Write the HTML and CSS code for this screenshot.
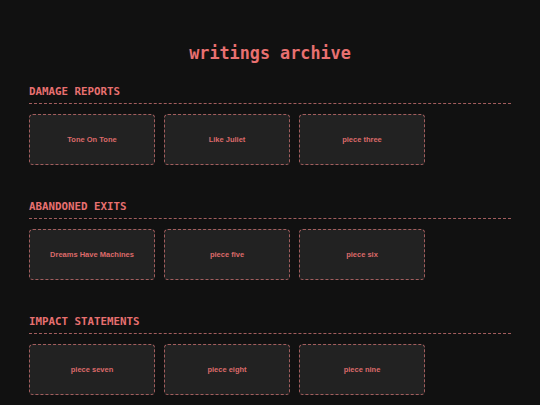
FILE: index.html
```html
<!DOCTYPE html>
<html lang="en">
  <head>
    <meta charset="UTF-8" />
    <meta name="viewport" content="width=device-width, initial-scale=1.0" />
    <title>writings archive</title>
    <link rel="stylesheet" href="styles.css">
  </head>
  <body>
    <div id="root">
      <h1 class="title">writings archive</h1>

      <section class="group">
        <h2 class="group-title">DAMAGE REPORTS</h2>
        <ul class="pieces">
          <li class="piece">Tone On Tone</li>
          <li class="piece">Like Juliet</li>
          <li class="piece">piece three</li>
        </ul>
      </section>

      <section class="group">
        <h2 class="group-title">ABANDONED EXITS</h2>
        <ul class="pieces">
          <li class="piece">Dreams Have Machines</li>
          <li class="piece">piece five</li>
          <li class="piece">piece six</li>
        </ul>
      </section>

      <section class="group">
        <h2 class="group-title">IMPACT STATEMENTS</h2>
        <ul class="pieces">
          <li class="piece">piece seven</li>
          <li class="piece">piece eight</li>
          <li class="piece">piece nine</li>
        </ul>
      </section>
    </div>
  </body>
</html>
```

FILE: styles.css
```css
* {
  margin: 0;
  padding: 0;
  box-sizing: border-box;
}
ul {
  list-style-type: none;
}
body {
  background-color: #111;
  color: #e87070;
  font-family: "DejaVu Sans Mono", monospace;
}
#root {
  padding: 43px 29px 0;
}
.title {
  font-size: 16.8px;
  line-height: 20px;
  font-weight: bold;
  text-align: center;
}
.group {
  margin-top: 22px;
}
.group + .group {
  margin-top: 35px;
}
.group-title {
  font-size: 10.8px;
  line-height: 13px;
  font-weight: bold;
  padding-bottom: 5px;
  border-bottom: 1px dashed #a35e5e;
}
.pieces {
  display: grid;
  grid-template-columns: repeat(3, 126px);
  gap: 9px;
  margin-top: 10px;
}
.piece {
  height: 51px;
  display: flex;
  justify-content: center;
  align-items: center;
  background-color: #222;
  border: 1px dashed #a35e5e;
  border-radius: 4px;
  font-family: "Liberation Sans", Arial, sans-serif;
  font-size: 7.5px;
  font-weight: bold;
  color: #dd6a6a;
  cursor: pointer;
}
```
